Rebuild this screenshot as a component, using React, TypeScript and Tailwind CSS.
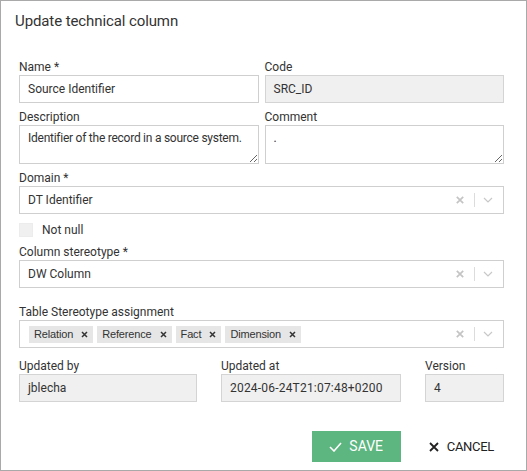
import React from "react";

const font = { fontFamily: "Roboto, 'Noto Sans', sans-serif" };

function Label({ children }: { children: React.ReactNode }) {
  return <div className="h-[16px] text-[12px] leading-[16px] text-[#333]">{children}</div>;
}

function ClearIcon() {
  return (
    <svg width="8" height="8" viewBox="0 0 8 8" className="shrink-0">
      <path d="M0.8 0.8 L7.2 7.2 M7.2 0.8 L0.8 7.2" stroke="#c4c4c4" strokeWidth="1.7" />
    </svg>
  );
}

function Chevron() {
  return (
    <svg width="10" height="6" viewBox="0 0 10 6" className="shrink-0">
      <path d="M1 1 L5 5 L9 1" stroke="#c8c8c8" strokeWidth="1.2" fill="none" />
    </svg>
  );
}

function SelectIndicators() {
  return (
    <div className="flex items-center pr-[10px]">
      <ClearIcon />
      <div className="ml-[10px] mr-[8px] h-[14px] w-px bg-[#dcdcdc]" />
      <Chevron />
    </div>
  );
}

function SelectBox({ children, pad = 8 }: { children: React.ReactNode; pad?: number }) {
  return (
    <div className="flex h-[28px] items-center border border-[#cfcfcf] bg-white">
      <div className={pad === 8 ? "flex flex-1 items-center pl-[8px]" : "flex flex-1 items-center pl-[9px]"}>
        {children}
      </div>
      <SelectIndicators />
    </div>
  );
}

function Chip({ text }: { text: string }) {
  return (
    <div
      className="flex h-[17px] items-center bg-[#e6e6e6] pl-[5px] pr-[5px] text-[11px] tracking-[-0.15px] text-[#333]"
      style={{ fontFamily: "'Liberation Sans', Arial, sans-serif" }}
    >
      <span>{text}</span>
      <svg width="7" height="7" viewBox="0 0 7 7" className="ml-[8px]">
        <path d="M1 1 L6 6 M6 1 L1 6" stroke="#333" strokeWidth="1.5" />
      </svg>
    </div>
  );
}

export default function App() {
  return (
    <div
      className="box-border h-[471px] w-[527px] border border-[#a9a9a9] bg-white text-[#333]"
      style={font}
    >
      <div className="pl-[18px] pr-[22px]">
        <div className="-ml-[4px] pt-[10px] text-[15px] leading-[20px] tracking-[-0.1px] text-[#333]">
          Update technical column
        </div>

        <div className="mt-[28px] grid grid-cols-2 gap-x-[6px]">
          <div>
            <Label>Name *</Label>
            <div className="flex h-[28px] items-center border border-[#cfcfcf] bg-white pl-[8px] text-[12px]">
              Source Identifier
            </div>
          </div>
          <div>
            <Label>Code</Label>
            <div className="flex h-[28px] items-center border border-[#d4d4d4] bg-[#f0f0f0] pl-[8px] text-[12px]">
              SRC_ID
            </div>
          </div>
        </div>

        <div className="mt-[6px] grid grid-cols-2 gap-x-[6px]">
          <div>
            <Label>Description</Label>
            <textarea
              readOnly
              className="block h-[39px] w-full overflow-hidden border border-[#cfcfcf] bg-white px-[8px] pt-[4px] text-[12px] leading-[16px] tracking-[-0.25px] text-[#333] outline-none"
              style={font}
              value="Identifier of the record in a source system."
            />
          </div>
          <div>
            <Label>Comment</Label>
            <textarea
              readOnly
              className="block h-[39px] w-full overflow-hidden border border-[#cfcfcf] bg-white px-[8px] pt-[4px] text-[12px] leading-[16px] text-[#333] outline-none"
              style={font}
              value="."
            />
          </div>
        </div>

        <div className="mt-[6px]">
          <Label>Domain *</Label>
          <SelectBox>
            <span className="text-[12px]">DT Identifier</span>
          </SelectBox>
        </div>

        <div className="mt-[9px] flex h-[14px] items-center">
          <div className="h-[14px] w-[14px] border border-[#ececec] bg-[#f0f0f0]" />
          <span className="ml-[9px] text-[12px]">Not null</span>
        </div>

        <div className="mt-[7px]">
          <Label>Column stereotype *</Label>
          <SelectBox>
            <span className="text-[12px]">DW Column</span>
          </SelectBox>
        </div>

        <div className="mt-[16px]">
          <Label>Table Stereotype assignment</Label>
          <SelectBox pad={9}>
            <div className="flex gap-[4px]">
              <Chip text="Relation" />
              <Chip text="Reference" />
              <Chip text="Fact" />
              <Chip text="Dimension" />
            </div>
          </SelectBox>
        </div>

        <div className="mt-[10px] grid grid-cols-[178px_180px_79px] gap-x-[24px]">
          <div>
            <Label>Updated by</Label>
            <div className="flex h-[28px] items-center border border-[#d4d4d4] bg-[#f0f0f0] pl-[8px] text-[12px]">
              jblecha
            </div>
          </div>
          <div>
            <Label>Updated at</Label>
            <div className="flex h-[28px] items-center border border-[#d4d4d4] bg-[#f0f0f0] pl-[8px] text-[12px] tracking-[0.2px]">
              2024-06-24T21:07:48+0200
            </div>
          </div>
          <div>
            <Label>Version</Label>
            <div className="flex h-[28px] items-center border border-[#d4d4d4] bg-[#f0f0f0] pl-[8px] text-[12px]">
              4
            </div>
          </div>
        </div>

        <div className="mt-[29px] flex items-center justify-end">
          <div className="flex h-[31px] w-[89px] items-center justify-center gap-[7px] bg-[#5db57f] text-[14px] text-white">
            <svg width="13" height="10" viewBox="0 0 13 10">
              <path d="M1 5 L5 9 L12 1" stroke="white" strokeWidth="1.6" fill="none" />
            </svg>
            <span>SAVE</span>
          </div>
          <div className="ml-[28px] mr-[10px] flex items-center gap-[8px] text-[13px] tracking-[-0.3px] text-[#222]">
            <svg width="10" height="10" viewBox="0 0 10 10">
              <path d="M1 1 L9 9 M9 1 L1 9" stroke="#222" strokeWidth="1.8" />
            </svg>
            <span>CANCEL</span>
          </div>
        </div>
      </div>
    </div>
  );
}
